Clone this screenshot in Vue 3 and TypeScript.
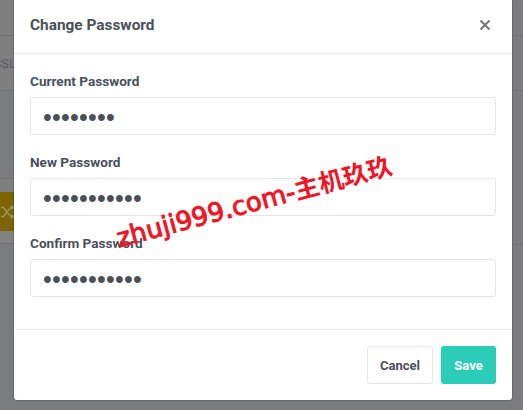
<script setup lang="ts">
const fields = [
  { label: 'Current Password', dots: '••••••••' },
  { label: 'New Password', dots: '•••••••••••' },
  { label: 'Confirm Password', dots: '•••••••••••' },
]
</script>

<template>
  <div class="page">
    <div class="left">
      <div class="bg-a"></div>
      <div class="bg-b"><span class="ssl">SSL</span></div>
      <div class="bg-c"></div>
      <div class="bg-e"></div>
      <div class="bg-d">
        <svg width="14" height="14" viewBox="0 0 14 14"><path d="M1 2.500h2.500l7 9H13M1 11.500h2.500l7-9H13M11 .5l2.500 2-2.500 2M11 9.500l2.500 2-2.500 2" fill="none" stroke="#9d9166" stroke-width="1.400"/></svg>
      </div>
      <div class="bg-f"></div>
    </div>
    <section class="modal">
      <header class="head">
        <h2 class="title">Change Password</h2>
        <svg class="close" width="12" height="12" viewBox="0 0 12 12"><path d="M1.500 1.500l9 9M10.500 1.500l-9 9" stroke="#7a7a7a" stroke-width="2.200"/></svg>
      </header>
      <div class="body">
        <div v-for="f in fields" :key="f.label" class="field">
          <label class="label">{{ f.label }}</label>
          <div class="input">{{ f.dots }}</div>
        </div>
      </div>
      <footer class="foot">
        <button class="btn cancel">Cancel</button>
        <button class="btn save">Save</button>
      </footer>
    </section>
    <div class="right">
      <div class="r-a"></div>
      <div class="r-b"></div>
      <div class="r-c"></div>
    </div>
    <div class="mark"><span class="latin">zhuji999.com-</span><span class="cjk">主机玖玖</span></div>
  </div>
</template>

<style>
html, body { margin: 0; background: #7b7c7e; }
</style>

<style scoped>
.page { position: relative; width: 523px; height: 410px; overflow: hidden; background: #7b7c7e; font-family: Roboto, "Open Sans", sans-serif; display: flex; align-items: flex-start; }
.left { width: 14px; height: 410px; overflow: hidden; flex: none; display: flex; flex-direction: column; background: #7b7c7e; }
.bg-a { height: 36px; flex: none; border-bottom: 1px solid #707173; box-sizing: border-box; background: #7f7f80; }
.bg-b { height: 55px; flex: none; border-bottom: 1px solid #707173; box-sizing: border-box; display: flex; align-items: center; justify-content: flex-end; background: #7f7f80; white-space: nowrap; overflow: hidden; }
.bg-c { height: 88px; flex: none; border-bottom: 1px solid #707173; box-sizing: border-box; }
.bg-e { height: 13px; flex: none; background: #7f7f80; }
.bg-d { height: 39px; flex: none; background: #7c6500; display: flex; align-items: center; }
.bg-f { height: 13px; flex: none; background: #828283; border-bottom: 1px solid #707173; box-sizing: border-box; }
.ssl { font-size: 13px; color: #5b5c62; margin-right: -2px; flex: none; }
.modal { flex: none; width: 498px; height: 400px; background: #fff; border-radius: 0 0 3px 3px; box-shadow: 0 0 2px rgba(0,0,0,.55); display: flex; flex-direction: column; }
.right { flex: 1; height: 245px; display: flex; flex-direction: column; }
.r-a { height: 36px; flex: none; border-bottom: 1px solid #707173; box-sizing: border-box; }
.r-b { height: 55px; flex: none; border-bottom: 1px solid #707173; box-sizing: border-box; }
.r-c { height: 154px; flex: none; border-bottom: 1px solid #707173; box-sizing: border-box; }
.head { height: 54px; flex: none; box-sizing: border-box; border-bottom: 1px solid #e6e9ee; display: flex; align-items: center; justify-content: space-between; padding: 0 21px 4px 16px; }
.title { margin: 0; font-size: 15.400px; font-weight: 700; color: #4a4f5a; }
.body { flex: 1; padding: 18px 16px 0; display: flex; flex-direction: column; gap: 18px; }
.label { display: block; font-size: 13.600px; font-weight: 700; color: #4a4f5a; line-height: 18px; margin-bottom: 7px; }
.input { height: 38px; box-sizing: border-box; border: 1px solid #e2e6ec; border-radius: 3px; padding: 0 12px; line-height: 39px; color: #4a4f5a; font-size: 25px; letter-spacing: .25px; font-family: "Liberation Sans", sans-serif; }
.foot { height: 71px; flex: none; box-sizing: border-box; border-top: 1px solid #e8eaee; display: flex; justify-content: flex-end; align-items: flex-start; gap: 8px; padding: 16px 16px 0; }
.btn { height: 38px; border-radius: 3px; font: 700 13px Roboto, sans-serif; cursor: pointer; }
.cancel { width: 66px; background: #fff; border: 1px solid #e2e6ec; color: #4a4f5a; }
.save { width: 55px; background: #2bccb8; border: 0; color: #fff; }
.mark { position: absolute; left: 122px; top: 218px; color: #f01525; line-height: 30px; transform: rotate(-15deg); transform-origin: left bottom; white-space: nowrap; }
.latin { font: 400 26px "DejaVu Sans", sans-serif; -webkit-text-stroke: 1px #f01525; }
.cjk { font: 700 25px "Noto Sans CJK SC", sans-serif; }
</style>
